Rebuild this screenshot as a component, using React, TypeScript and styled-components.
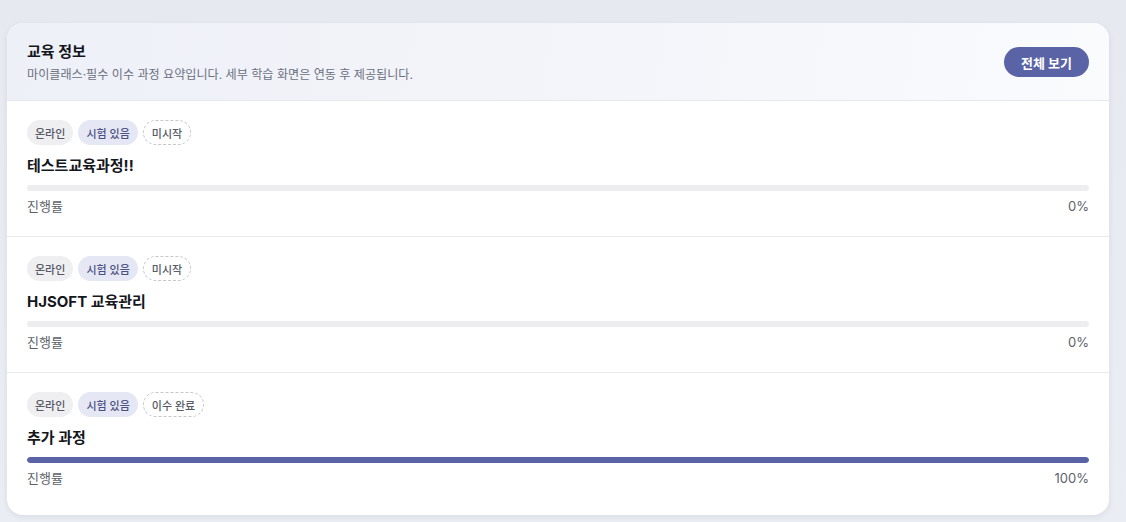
import React from "react";
import styled, { createGlobalStyle } from "styled-components";

const GlobalStyle = createGlobalStyle`
  html, body {
    margin: 0;
    padding: 0;
    background: #e9ecf2;
    font-family: Inter, "Noto Sans CJK KR", sans-serif;
  }
`;

const Page = styled.div`
  padding: 23px 17px 7px 7px;
  min-height: 522px;
  box-sizing: border-box;
  background: linear-gradient(180deg, #e6e9f0 0%, #eaedf3 100%);
`;

const Card = styled.section`
  background: #ffffff;
  border-radius: 16px;
  box-shadow: 0 2px 6px rgba(30, 40, 80, 0.08);
  overflow: hidden;
`;

const Header = styled.header`
  display: flex;
  align-items: center;
  justify-content: space-between;
  height: 78px;
  box-sizing: border-box;
  padding: 0 20px;
  background: linear-gradient(100deg, #eef0f8 0%, #f4f5fa 55%, #fafbfd 100%);
  border-bottom: 1px solid #e6e8ee;
`;

const HeaderText = styled.div`
  display: flex;
  flex-direction: column;
  gap: 5px;
  padding-top: 2px;
`;

const Title = styled.h2`
  margin: 0;
  font-size: 15px;
  font-weight: 700;
  color: #14161c;
  line-height: 20px;
`;

const Subtitle = styled.p`
  margin: 0;
  font-size: 12.1px;
  color: #6b7080;
  line-height: 16px;
`;

const ViewAll = styled.button`
  border: none;
  background: #5a63a6;
  color: #ffffff;
  font-family: inherit;
  font-size: 13px;
  font-weight: 700;
  height: 30px;
  padding: 0 17px;
  border-radius: 15px;
  cursor: pointer;
  margin-top: 1px;
`;

const Item = styled.div`
  display: flex;
  flex-direction: column;
  padding: 19px 20px 21px;
  border-bottom: 1px solid #e9eaee;
  &:last-child {
    border-bottom: none;
    padding-bottom: 28px;
  }
`;

const TagRow = styled.div`
  display: flex;
  gap: 5px;
`;

type TagKind = "gray" | "indigo" | "dashed";

const Tag = styled.span<{ $kind: TagKind }>`
  display: inline-flex;
  align-items: center;
  height: 25px;
  box-sizing: border-box;
  padding: 0 8px;
  border-radius: 13px;
  font-size: 11px;
  font-weight: 500;
  background: ${(p) =>
    p.$kind === "gray" ? "#efeff1" : p.$kind === "indigo" ? "#e5e7f4" : "#ffffff"};
  color: ${(p) => (p.$kind === "indigo" ? "#4b5283" : "#555a66")};
  border: ${(p) => (p.$kind === "dashed" ? "1px dashed #c4c7cf" : "none")};
`;

const CourseName = styled.h3`
  margin: 12px 0 0;
  font-size: 15px;
  font-weight: 700;
  color: #15171d;
  line-height: 18px;
`;

const Track = styled.div`
  margin-top: 10px;
  height: 6px;
  border-radius: 3px;
  background: #ededef;
  overflow: hidden;
`;

const Fill = styled.div`
  height: 100%;
  border-radius: 3px;
  background: #5a63a6;
`;

const ProgressRow = styled.div`
  display: flex;
  justify-content: space-between;
  margin-top: 6px;
  font-size: 13px;
  color: #5d616b;
  line-height: 18px;
`;

type Course = { name: string; status: string; progress: number };

const courses: Course[] = [
  { name: "테스트교육과정!!", status: "미시작", progress: 0 },
  { name: "HJSOFT 교육관리", status: "미시작", progress: 0 },
  { name: "추가 과정", status: "이수 완료", progress: 100 },
];

export default function App() {
  return (
    <>
      <GlobalStyle />
      <Page>
        <Card>
          <Header>
            <HeaderText>
              <Title>교육 정보</Title>
              <Subtitle>
                마이클래스·필수 이수 과정 요약입니다. 세부 학습 화면은 연동 후 제공됩니다.
              </Subtitle>
            </HeaderText>
            <ViewAll>전체 보기</ViewAll>
          </Header>
          {courses.map((c) => (
            <Item key={c.name}>
              <TagRow>
                <Tag $kind="gray">온라인</Tag>
                <Tag $kind="indigo">시험 있음</Tag>
                <Tag $kind="dashed">{c.status}</Tag>
              </TagRow>
              <CourseName>{c.name}</CourseName>
              <Track>
                <Fill style={{ width: `${c.progress}%` }} />
              </Track>
              <ProgressRow>
                <span>진행률</span>
                <span>{c.progress}%</span>
              </ProgressRow>
            </Item>
          ))}
        </Card>
      </Page>
    </>
  );
}
